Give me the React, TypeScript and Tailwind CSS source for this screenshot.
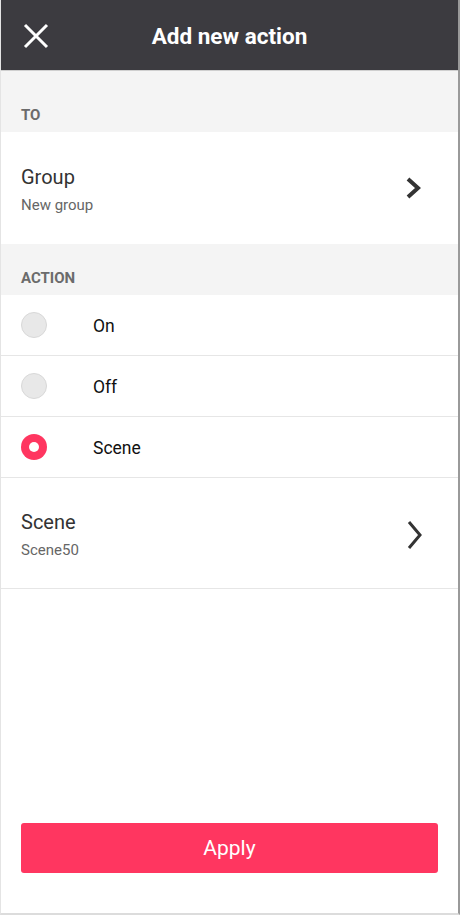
const font = { fontFamily: "Roboto, 'Noto Sans', sans-serif" };

type Option = { label: string; checked?: boolean };

const options: Option[] = [{ label: "On" }, { label: "Off" }, { label: "Scene", checked: true }];

const CloseIcon = () => (
  <svg width="26" height="26" viewBox="0 0 26 26" fill="none" className="mt-[2px]">
    <path d="M2 2 L24 24 M24 2 L2 24" stroke="white" strokeWidth="3" />
  </svg>
);

const Chevron = ({ bold }: { bold?: boolean }) =>
  bold ? (
    <svg width="18" height="24" viewBox="0 0 18 24" fill="none">
      <path d="M3 3 L13 12 L3 21" stroke="#333" strokeWidth="4" strokeLinejoin="miter" />
    </svg>
  ) : (
    <svg width="18" height="30" viewBox="0 0 18 30" fill="none" className="mt-[3px]">
      <path d="M3 2 L14 15 L3 28" stroke="#333" strokeWidth="3" />
    </svg>
  );

const SectionLabel = ({ text, h }: { text: string; h: string }) => (
  <div className={`bg-[#f4f4f4] flex items-end pb-[6px] px-5 ${h}`}>
    <span className="text-[15px] font-bold text-[#6b6b6b]">{text}</span>
  </div>
);

const NavRow = ({ title, sub, bold, h }: { title: string; sub: string; bold?: boolean; h: string }) => (
  <div className={`flex items-center justify-between pl-5 ${bold ? "pr-[35px]" : "pr-[34px]"} bg-white ${h}`}>
    <div className="flex flex-col pt-[3px]">
      <span className="text-[20px] text-[#333] leading-[26px]">{title}</span>
      <span className="text-[15px] text-[#666] leading-[20px] mt-[5px]">{sub}</span>
    </div>
    <Chevron bold={bold} />
  </div>
);

export default function App() {
  return (
    <div
      style={font}
      className="w-[460px] h-[915px] flex flex-col bg-white border-l border-[#e4e4e4] border-r-2 border-r-[#9a9a9a] border-b-2 border-b-[#dcdcdc]"
    >
      {/* Header */}
      <div className="h-[71px] bg-[#3c3b40] flex items-center px-[22px] border-b border-[#cfcfcf] relative">
        <CloseIcon />
        <span className="absolute left-0 right-0 pt-[3px] text-center text-white text-[22.5px] font-bold pointer-events-none">
          Add new action
        </span>
      </div>

      <SectionLabel text="TO" h="h-[61px]" />
      <NavRow title="Group" sub="New group" bold h="h-[112px]" />
      <SectionLabel text="ACTION" h="h-[51px]" />

      {/* Options */}
      {options.map((o) => (
        <div key={o.label} className="h-[61px] flex items-center border-b border-[#e6e6e6] pl-5">
          {o.checked ? (
            <div className="w-[26px] h-[26px] rounded-full bg-[#ff3660] flex items-center justify-center">
              <div className="w-[10px] h-[10px] rounded-full bg-white" />
            </div>
          ) : (
            <div className="w-[26px] h-[26px] rounded-full bg-[#e8e8e8] border border-[#d8d8d8]" />
          )}
          <span className="ml-[46px] pt-[3px] text-[17.5px] text-[#111]">{o.label}</span>
        </div>
      ))}

      <div className="border-b border-[#e6e6e6]">
        <NavRow title="Scene" sub="Scene50" h="h-[110px]" />
      </div>

      <div className="flex-1" />

      <div className="px-5 pb-[40px]">
        <button className="w-full h-[50px] pt-[2px] rounded-[3px] bg-[#ff3660] text-white text-[21px]">Apply</button>
      </div>
    </div>
  );
}
